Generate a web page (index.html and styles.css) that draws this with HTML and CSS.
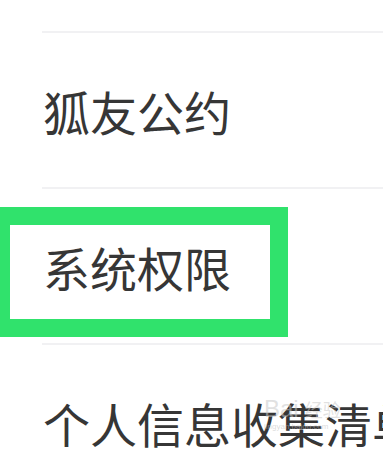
FILE: index.html
```html
<!DOCTYPE html>
<html lang="zh-CN">
<head>
<meta charset="utf-8">
<title>设置</title>
<link rel="stylesheet" href="styles.css">
</head>
<body>
<div class="page">
  <div class="list">
    <div class="row row-prev"></div>
    <div class="row"><span class="label">狐友公约</span></div>
    <div class="row highlighted"><span class="label">系统权限</span><div class="mark"></div></div>
    <div class="row"><span class="label">个人信息收集清单</span>
      <div class="watermark"><span class="wm-main">Bai<span class="wm-cn">经验</span></span><span class="wm-sub">jingyan.baidu.com</span></div>
    </div>
  </div>
</div>
</body>
</html>
```
FILE: styles.css
```css
html, body {
  margin: 0;
  padding: 0;
  background: #ffffff;
}
.page {
  width: 383px;
  height: 456px;
  overflow: hidden;
  position: relative;
  font-family: "Noto Sans CJK SC", "Noto Sans", sans-serif;
}
.list {
  margin-left: 42px;
}
.row {
  position: relative;
  height: 154px;
  border-top: 2px solid #f1f1f3;
  display: flex;
  align-items: center;
  white-space: nowrap;
}
.row-prev {
  height: 31px;
  border-top: none;
}
.label {
  font-size: 47px;
  color: #363636;
  line-height: 1;
  padding-left: 1px;
  margin-top: 1px;
}
.mark {
  position: absolute;
  left: -50px;
  top: 18px;
  width: 260px;
  height: 94px;
  border: 18px solid #30e26c;
}
.watermark {
  position: absolute;
  left: 222px;
  top: 52px;
  display: flex;
  flex-direction: column;
  align-items: flex-start;
  color: rgba(255, 255, 255, 0.7);
  pointer-events: none;
}
.wm-main {
  font-family: "Liberation Sans", sans-serif;
  font-size: 24px;
  line-height: 1;
  color: rgba(200, 200, 200, 0.55);
}
.wm-cn {
  font-family: "Noto Sans CJK SC", sans-serif;
  font-size: 18px;
  margin-left: 6px;
}
.wm-sub {
  font-family: "Liberation Sans", sans-serif;
  font-size: 8px;
  line-height: 1;
  margin-top: 2px;
  color: rgba(190, 190, 190, 0.55);
}
```
